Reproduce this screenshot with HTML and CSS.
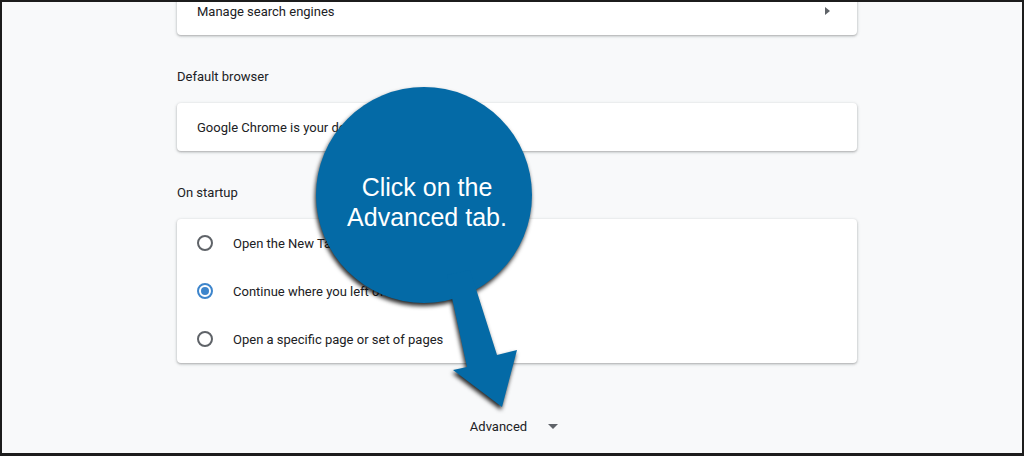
FILE: index.html
```html
<!DOCTYPE html>
<html lang="en">
<head>
  <meta charset="UTF-8" />
  <meta name="viewport" content="width=device-width, initial-scale=1" />
  <title>Settings - On startup</title>
  <link rel="stylesheet" href="styles.css">
</head>
<body>
  <div class="frame">
    <div class="column">
      <div class="card first">
        <div class="row link-row">
          <span>Manage search engines</span>
          <span class="sub-arrow"></span>
        </div>
      </div>

      <h2 class="section-title">Default browser</h2>
      <div class="card">
        <div class="row">Google Chrome is your default browser</div>
      </div>

      <h2 class="section-title">On startup</h2>
      <div class="card">
        <label class="row radio-row"><span class="radio"></span>Open the New Tab page</label>
        <label class="row radio-row"><span class="radio checked"></span>Continue where you left off</label>
        <label class="row radio-row"><span class="radio"></span>Open a specific page or set of pages</label>
      </div>

      <div class="advanced">
        <span>Advanced</span>
        <span class="drop-arrow"></span>
      </div>
    </div>

    <!-- callout drawn over the page -->
    <svg class="callout-shape" width="240" height="340" viewBox="0 0 240 340">
      <g fill="#046aa6">
        <circle cx="124" cy="115" r="108" />
        <polygon points="147,195 170,190 197,275 217,270 202,327 153,290 167,287" />
      </g>
    </svg>
    <div class="callout-text">Click on the<br>Advanced tab.</div>
  </div>
</body>
</html>
```

FILE: styles.css
```css
body {
  margin: 0;
  font-family: Roboto, "Liberation Sans", sans-serif;
  font-size: 13px;
  color: #202124;
}
.frame {
  position: relative;
  width: 1024px;
  height: 456px;
  box-sizing: border-box;
  border: 2px solid #1c1c1c;
  border-bottom-width: 3px;
  background: #f8f9fa;
  overflow: hidden;
}
.column {
  width: 680px;
  margin-left: 175px;
}
.card {
  background: #fff;
  border-radius: 4px;
  box-shadow: 0 1px 2px rgba(60,64,67,0.3), 0 1px 3px 1px rgba(60,64,67,0.12);
}
.card.first {
  margin-top: -15px;
}
.row {
  display: flex;
  align-items: center;
  height: 48px;
  padding: 0 20px;
}
.link-row {
  justify-content: space-between;
}
.sub-arrow {
  width: 0;
  height: 0;
  margin-right: 7px;
  border-top: 4px solid transparent;
  border-bottom: 4px solid transparent;
  border-left: 5px solid #5f6368;
}
.section-title {
  margin: 32px 0 16px;
  font-size: 13px;
  font-weight: 400;
  line-height: 20px;
}
.radio-row {
  gap: 20px;
}
.radio {
  width: 16px;
  height: 16px;
  box-sizing: border-box;
  border: 2px solid #5f6368;
  border-radius: 50%;
  position: relative;
}
.radio.checked {
  border-color: #3d85cc;
}
.radio.checked::after {
  content: "";
  position: absolute;
  left: 2px;
  top: 2px;
  width: 8px;
  height: 8px;
  border-radius: 50%;
  background: #3d85cc;
}
.advanced {
  display: flex;
  justify-content: center;
  align-items: center;
  gap: 21px;
  margin-top: 53px;
  height: 20px;
  padding-right: 6px;
}
.drop-arrow {
  width: 0;
  height: 0;
  border-left: 5px solid transparent;
  border-right: 5px solid transparent;
  border-top: 5px solid #5f6368;
}
.callout-shape {
  position: absolute;
  left: 298px;
  top: 78px;
  filter: drop-shadow(-1px 3px 2px rgba(0,0,0,0.85));
}
.callout-text {
  position: absolute;
  left: 325px;
  top: 170px;
  width: 200px;
  text-align: center;
  font-family: "Liberation Sans", Arial, sans-serif;
  font-size: 25px;
  line-height: 30px;
  color: #fff;
}
```
